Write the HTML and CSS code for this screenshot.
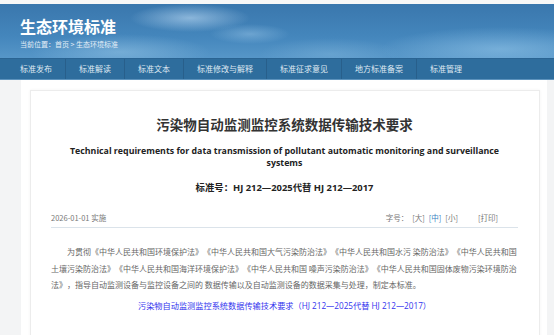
FILE: index.html
```html
<!DOCTYPE html>
<html lang="zh-CN">
<head>
    <meta charset="UTF-8">
    <meta name="viewport" content="width=device-width, initial-scale=1.0">
    <title>污染物自动监测监控系统数据传输技术要求</title>
    <link rel="stylesheet" href="styles.css">
</head>
<body>
    <div class="top-strip"></div>
    <header class="banner">
        <h1 class="site-name">生态环境标准</h1>
        <div class="crumb">当前位置：首页 &gt; 生态环境标准</div>
    </header>
    <nav class="nav">
        <ul>
            <li>标准发布</li>
            <li>标准解读</li>
            <li>标准文本</li>
            <li>标准修改与解释</li>
            <li>标准征求意见</li>
            <li>地方标准备案</li>
            <li>标准管理</li>
        </ul>
    </nav>
    <div class="page">
        <div class="wrap">
            <div class="card">
                <h2 class="title">污染物自动监测监控系统数据传输技术要求</h2>
                <p class="title-en">Technical requirements for data transmission of pollutant automatic monitoring and surveillance systems</p>
                <p class="std-no">标准号：HJ 212—2025代替 HJ 212—2017</p>
                <div class="meta">
                    <span class="date">2026-01-01 实施</span>
                    <span class="tools">字号：<a>[大]</a><a class="on">[中]</a><a>[小]</a><a class="print">[打印]</a></span>
                </div>
                <p class="intro">为贯彻《中华人民共和国环境保护法》《中华人民共和国大气污染防治法》《中华人民共和国水污 染防治法》《中华人民共和国土壤污染防治法》《中华人民共和国海洋环境保护法》《中华人民共和国 噪声污染防治法》《中华人民共和国固体废物污染环境防治法》，指导自动监测设备与监控设备之间的 数据传输以及自动监测设备的数据采集与处理，制定本标准。</p>
                <p class="file-link"><a>污染物自动监测监控系统数据传输技术要求（HJ 212—2025代替 HJ 212—2017）</a></p>
            </div>
        </div>
    </div>
</body>
</html>
```

FILE: styles.css
```css
body {
    margin: 0;
    font-family: "Noto Sans CJK SC", "Noto Sans", sans-serif;
    background-color: #f3f4f5;
    color: #333;
    text-spacing-trim: space-all;
}
.top-strip {
    height: 4px;
    background-color: #f7f7f7;
}
.banner {
    height: 54px;
    padding: 12px 0 0 20px;
    box-sizing: border-box;
    background-color: #4585bb;
    background-image:
        radial-gradient(ellipse 60px 14px at 190px 14px, rgba(190, 220, 245, 0.6), transparent),
        radial-gradient(ellipse 40px 10px at 250px 30px, rgba(170, 210, 240, 0.4), transparent),
        radial-gradient(ellipse 90px 18px at 120px 48px, rgba(160, 205, 235, 0.45), transparent),
        radial-gradient(ellipse 120px 22px at 500px 45px, rgba(150, 200, 235, 0.55), transparent),
        radial-gradient(ellipse 70px 16px at 330px 50px, rgba(140, 190, 225, 0.35), transparent),
        linear-gradient(180deg, #3a77ad 0%, #4486bc 60%, #5696c8 100%);
}
.site-name {
    margin: 0;
    font-size: 16px;
    line-height: 20px;
    font-weight: bold;
    color: #fff;
}
.crumb {
    margin-top: 3px;
    font-size: 7px;
    line-height: 10px;
    color: #e4eef7;
}
.nav {
    height: 22px;
    background-color: #2e6d9d;
    border-top: 1px solid #2a6493;
    border-bottom: 1px solid #5d93bd;
    box-sizing: border-box;
}
.nav ul {
    display: flex;
    margin: 0;
    padding: 0 0 0 20px;
    list-style: none;
}
.nav li {
    padding: 0 13px;
    font-size: 8px;
    line-height: 20px;
    color: #dfe9f2;
}
.nav li:first-child {
    padding-left: 0;
}
.nav li + li {
    border-left: 1px solid #285f8b;
}
.page {
    height: 255px;
    overflow: hidden;
}
.wrap {
    width: 526px;
    margin-left: 21px;
    padding: 10px 7px 0 9px;
    box-sizing: border-box;
    background-color: #fff;
    height: 100%;
}
.card {
    border: 1px solid #ececec;
    box-shadow: 0 0 3px rgba(0, 0, 0, 0.05);
    padding: 24px 21px 40px 20px;
    height: 400px;
}
.title {
    margin: 0;
    text-align: center;
    font-size: 13.5px;
    line-height: 18px;
    font-weight: bold;
    color: #333;
}
.title-en {
    margin: 12px 0 0;
    padding: 0 15px;
    text-align: center;
    font-family: "Open Sans", sans-serif;
    font-size: 8.8px;
    line-height: 12px;
    font-weight: bold;
    color: #222;
}
.std-no {
    margin: 13px 0 0;
    text-align: center;
    font-family: "Open Sans", "Noto Sans CJK SC", sans-serif;
    font-size: 9.4px;
    line-height: 12px;
    font-weight: bold;
    color: #222;
}
.meta {
    display: flex;
    justify-content: space-between;
    margin-top: 18px;
    padding-bottom: 3px;
    border-bottom: 1px solid #dbe3ea;
    font-size: 7.5px;
    line-height: 12px;
    color: #777;
}
.tools {
    padding-right: 20px;
}
.tools a {
    margin-left: 4px;
}
.tools a.on {
    color: #3a7fc1;
}
.tools a.print {
    margin-left: 20px;
}
.intro {
    margin: 16px 0 0;
    font-size: 8px;
    line-height: 16.7px;
    text-indent: 2em;
    color: #666;
}
.file-link {
    margin: 4px 0 0;
    text-align: center;
    font-family: "Open Sans", "Noto Sans CJK SC", sans-serif;
    font-size: 8.2px;
    line-height: 16px;
}
.file-link a {
    color: #3333ee;
}
```
